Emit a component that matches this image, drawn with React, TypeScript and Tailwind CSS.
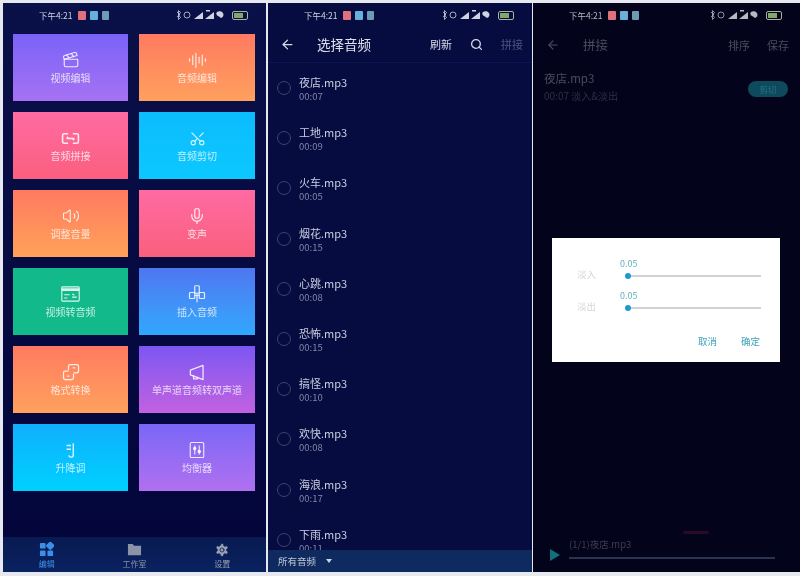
import { ArrowLeft, AudioLines, Clapperboard, Mic, Scissors, Search, Settings, Volume2 } from "lucide-react"
import type { ReactNode } from "react"

const cjk = "font-['Noto_Sans_CJK_SC','Liberation_Sans',sans-serif]"

function CardIcon() {
  return (
    <svg viewBox="0 0 24 20" className="h-[16px] w-[19px]" fill="none" stroke="currentColor" strokeWidth="1.4">
      <rect x="1" y="1" width="22" height="18" rx="1" />
      <path d="M1 4.500h22" strokeWidth="3.500" />
      <path d="M4 11h7M4 15h4M14 14h6M14 10l3 1.500" />
    </svg>
  )
}

function InsertIcon() {
  return (
    <svg viewBox="0 0 24 24" className="h-[18px] w-[18px]" fill="none" stroke="currentColor" strokeWidth="1.6">
      <rect x="9" y="1" width="6" height="10" rx="1" />
      <rect x="2" y="10" width="7" height="8" rx="1" />
      <rect x="15" y="10" width="7" height="8" rx="1" />
      <path d="M9 14h6M12 11v12" />
    </svg>
  )
}

function ChainIcon() {
  return (
    <svg viewBox="0 0 24 16" className="h-[13px] w-[19px]" fill="none" stroke="currentColor" strokeWidth="2">
      <path d="M9 2H4a2 2 0 0 0-2 2v8a2 2 0 0 0 2 2h5M15 2h5a2 2 0 0 1 2 2v8a2 2 0 0 1-2 2h-5" />
      <path d="M7 8h10M7 8l2-2M17 8l-2 2" />
    </svg>
  )
}

function FormatIcon() {
  return (
    <svg viewBox="0 0 24 24" className="h-[20px] w-[20px]" fill="none" stroke="currentColor" strokeWidth="1.500" strokeLinejoin="round">
      <path d="M9 10V5a2 2 0 0 1 2-2h8a2 2 0 0 1 2 2v6a2 2 0 0 1-2 2h-4" />
      <path d="M15 14v5a2 2 0 0 1-2 2H5a2 2 0 0 1-2-2v-6a2 2 0 0 1 2-2h4" />
      <path d="M14 7h3M7 17h3" />
    </svg>
  )
}

function HornIcon() {
  return (
    <svg viewBox="0 0 24 24" className="h-[19px] w-[19px]" fill="none" stroke="currentColor" strokeWidth="1.6" strokeLinejoin="round">
      <path d="M3 9l16-6v18L3 15z" />
      <path d="M7 15.500V20h5v-2.600" />
    </svg>
  )
}

function PitchIcon() {
  return (
    <svg viewBox="0 0 24 24" className="h-[18px] w-[18px]" fill="none" stroke="currentColor" strokeWidth="1.8">
      <path d="M15 3v15a3 3 0 0 1-6 1M6 6h6M6 11h6" />
    </svg>
  )
}

function EqualizerIcon() {
  return (
    <svg viewBox="0 0 24 24" className="h-[18px] w-[18px]" fill="none" stroke="currentColor" strokeWidth="1.500">
      <rect x="3" y="2" width="18" height="20" rx="1.500" />
      <path d="M9 6v12M15 6v12" />
      <circle cx="9" cy="10" r="1.600" fill="currentColor" />
      <circle cx="15" cy="14" r="1.600" fill="currentColor" />
    </svg>
  )
}

const tiles: { label: string; icon: ReactNode; bg: string }[] = [
  { label: "视频编辑", icon: <Clapperboard size={18} strokeWidth={1.5} />, bg: "bg-gradient-to-b from-[#7a62f8] to-[#a672f2]" },
  { label: "音频编辑", icon: <AudioLines size={19} strokeWidth={1.4} />, bg: "bg-gradient-to-b from-[#ff7a60] to-[#ffa05e]" },
  { label: "音频拼接", icon: <ChainIcon />, bg: "bg-gradient-to-b from-[#ff6ba2] to-[#fb5f7e]" },
  { label: "音频剪切", icon: <Scissors size={17} strokeWidth={1.5} className="-rotate-90" />, bg: "bg-gradient-to-b from-[#0cbcfe] to-[#0cc8ff]" },
  { label: "调整音量", icon: <Volume2 size={18} strokeWidth={1.5} />, bg: "bg-gradient-to-b from-[#ff7a60] to-[#ffa158]" },
  { label: "变声", icon: <Mic size={18} strokeWidth={1.6} />, bg: "bg-gradient-to-b from-[#ff6ba2] to-[#f95f7c]" },
  { label: "视频转音频", icon: <CardIcon />, bg: "bg-[#12b98b]" },
  { label: "插入音频", icon: <InsertIcon />, bg: "bg-gradient-to-b from-[#4d76f0] to-[#2ea8fd]" },
  { label: "格式转换", icon: <FormatIcon />, bg: "bg-gradient-to-b from-[#ff7a60] to-[#ffa15c]" },
  { label: "单声道音频转双声道", icon: <HornIcon />, bg: "bg-gradient-to-b from-[#7c56f2] to-[#c260e0]" },
  { label: "升降调", icon: <PitchIcon />, bg: "bg-gradient-to-b from-[#10b0fc] to-[#00d0ff]" },
  { label: "均衡器", icon: <EqualizerIcon />, bg: "bg-gradient-to-b from-[#7a66f6] to-[#b070f0]" },
]

const songs = [
  ["夜店.mp3", "00:07"],
  ["工地.mp3", "00:09"],
  ["火车.mp3", "00:05"],
  ["烟花.mp3", "00:15"],
  ["心跳.mp3", "00:08"],
  ["恐怖.mp3", "00:15"],
  ["搞怪.mp3", "00:10"],
  ["欢快.mp3", "00:08"],
  ["海浪.mp3", "00:17"],
  ["下雨.mp3", "00:11"],
]

function StatusBar({ dim }: { dim?: boolean }) {
  return (
    <div className={`flex h-[24px] shrink-0 items-center justify-between pl-[36px] pr-[18px] text-[8.500px] ${dim ? "text-[#b8b8c0]" : "text-[#cfd3e0]"}`}>
      <div className="flex items-center gap-[4px]">
        <span className="mr-[1px]">下午4:21</span>
        <span className="h-[9px] w-[8px] rounded-[1px] bg-[#e0707c]" />
        <span className="h-[9px] w-[8px] rounded-[1px] bg-[#68b0d8]" />
        <span className="h-[9px] w-[7px] rounded-[1px] bg-[#6a9cb4]" />
      </div>
      <div className="flex items-center gap-[4px]">
        <svg viewBox="0 0 52 10" className="h-[10px] w-[52px]" fill="currentColor">
          <path d="M1 2l3 2.500L1 7M2.500 0.500v9l2-2-2-2.500 2-2.500z" fill="none" stroke="currentColor" strokeWidth="0.8" />
          <circle cx="11" cy="5" r="3" fill="none" stroke="currentColor" strokeWidth="0.8" />
          <path d="M18 9l9-7v7zM29 9l9-7v7zM30 0h4v1.500h-4z" />
          <path d="M41 2a4 3.500 0 1 1 4 6l-2-1.500a4 3 0 0 1-2-4.500z" />
        </svg>
        <span className="flex h-[9px] w-[16px] items-center rounded-[2px] border border-[#a8b4a0] p-[1px]">
          <span className="h-full w-[9px] bg-[#80a868]" />
        </span>
      </div>
    </div>
  )
}

function HomePanel() {
  return (
    <div className="flex w-[263px] shrink-0 flex-col bg-gradient-to-b from-[#0a1048] to-[#03053a]">
      <StatusBar />
      <div className="grid grid-cols-[115px_116px] gap-x-[11px] gap-y-[11px] pl-[10px] pt-[7px]">
        {tiles.map((t) => (
          <div key={t.label} className={`flex h-[67px] flex-col items-center justify-center gap-[1px] text-white/85 ${t.bg}`}>
            <span className="flex h-[20px] items-center">{t.icon}</span>
            <span className="text-[10px] leading-[14px] text-white/75">{t.label}</span>
          </div>
        ))}
      </div>
      <div className="mt-auto grid h-[35px] grid-cols-3 bg-gradient-to-b from-[#081a52] to-[#0a2260] text-[8px]">
        <div className="flex flex-col items-center pt-[5px] text-[#3c8ee8]">
          <svg viewBox="0 0 16 16" className="h-[15px] w-[15px]" fill="currentColor">
            <rect x="1" y="1" width="6" height="6" rx="1" />
            <rect x="8.500" y="0.500" width="7" height="7" rx="1" transform="rotate(45 12 4)" />
            <rect x="1" y="9" width="6" height="6" rx="1" />
            <rect x="9" y="9" width="6" height="6" rx="1" />
          </svg>
          <span className="leading-[13px]">编辑</span>
        </div>
        <div className="flex flex-col items-center pt-[5px] text-[#8a93a8]">
          <svg viewBox="0 0 16 16" className="h-[15px] w-[15px]" fill="currentColor">
            <path d="M1 2h5l1.500 2H15v10H1z" />
          </svg>
          <span className="leading-[13px]">工作室</span>
        </div>
        <div className="flex flex-col items-center pt-[5px] text-[#98a0b2]">
          <Settings size={16} fill="currentColor" stroke="#0a1d58" strokeWidth={1.2} className="-my-[0.5px]" />
          <span className="leading-[13px]">设置</span>
        </div>
      </div>
    </div>
  )
}

function SelectPanel() {
  return (
    <div className="relative ml-[2px] w-[264px] shrink-0 overflow-hidden bg-[#070c40]">
      <StatusBar />
      <div className="flex h-[36px] items-center border-b border-[#0d1550] pl-[12px] pr-[9px] text-[#d8dbe8]">
        <ArrowLeft size={15} />
        <span className="ml-[22px] text-[13.500px] text-[#dfe2ee]">选择音频</span>
        <span className="ml-auto text-[11px]">刷新</span>
        <Search size={13} strokeWidth={2.4} className="ml-[18px]" />
        <span className="ml-[18px] text-[11px] text-[#4b5680]">拼接</span>
      </div>
      <div className="pl-[9px]">
        {songs.map(([name, time]) => (
          <div key={name} className="flex h-[50.200px] items-center">
            <span className="h-[14px] w-[14px] rounded-full border border-[#3b4570]" />
            <div className="ml-[8px] mt-[2px]">
              <div className="text-[11px] leading-[14px] text-[#c8cde0]">{name}</div>
              <div className="text-[9.500px] leading-[14px] text-[#7f88a8]">{time}</div>
            </div>
          </div>
        ))}
      </div>
      <div className="absolute inset-x-0 bottom-0 flex h-[22px] items-center bg-[#0e2a5e] pl-[10px] text-[9.500px] text-[#c0c6d8]">
        所有音频
        <span className="ml-[10px] h-0 w-0 border-x-[3.500px] border-t-[4px] border-x-transparent border-t-[#d0d4e0]" />
      </div>
    </div>
  )
}

function DialogSlider({ label }: { label: string }) {
  return (
    <div className="flex h-[32px] items-end">
      <span className="mb-[-2px] w-[48px] text-[9.500px] text-[#d4d6da]">{label}</span>
      <div className="flex-1">
        <div className="-ml-[5px] leading-[13px] text-[#5fb0c0]">0.05</div>
        <div className="mt-[3px] flex items-center">
          <span className="h-[6px] w-[6px] rounded-full bg-[#1e9ac8]" />
          <span className="h-[1.500px] flex-1 bg-[#d2d2d2]" />
        </div>
      </div>
    </div>
  )
}

function JoinPanel() {
  return (
    <div className="relative ml-[1px] flex-1 overflow-hidden bg-[#04031c]">
      <StatusBar dim />
      <div className="flex h-[36px] items-center pl-[13px] pr-[11px] text-[#4a4c5e]">
        <ArrowLeft size={14} />
        <span className="ml-[23px] text-[12.500px]">拼接</span>
        <span className="ml-auto text-[11px]">排序</span>
        <span className="ml-[17px] text-[11px]">保存</span>
      </div>
      <div className="flex items-start justify-between pl-[11px] pr-[12px] pt-[7px]">
        <div>
          <div className="text-[11.500px] leading-[16px] text-[#4a4c5e]">夜店.mp3</div>
          <div className="mt-[3px] text-[10px] leading-[13px] text-[#2e3044]">00:07 淡入&amp;淡出</div>
        </div>
        <span className="mt-[11px] flex h-[16px] w-[40px] items-center justify-center rounded-full bg-[#0e4a5c] text-[8.500px] text-[#1f7486]">剪切</span>
      </div>

      <div className="absolute left-[19px] top-[235px] h-[124px] w-[228px] bg-white pl-[25px] pr-[19px] pt-[9px] text-[9px]">
        <DialogSlider label="淡入" />
        <DialogSlider label="淡出" />
        <div className="mt-[23px] flex justify-end gap-[24px] pr-[1px] text-[9.500px] text-[#3fa4b8]">
          <span>取消</span>
          <span>确定</span>
        </div>
      </div>

      <span className="absolute left-[150px] top-[528px] h-[3px] w-[26px] rounded-full bg-[#2a0a28]" />
      <div className="absolute bottom-[13px] left-[17px] right-[25px] flex items-end">
        <span className="mb-[-2px] h-0 w-0 border-y-[6px] border-l-[10px] border-y-transparent border-l-[#10707c]" />
        <div className="ml-[9px] flex-1">
          <div className="text-[9.500px] leading-[14px] text-[#3c3e54]">(1/1)夜店.mp3</div>
          <div className="mt-[6px] h-[2px] bg-[#2a3450]" />
        </div>
      </div>
    </div>
  )
}

export default function App() {
  return (
    <div className={`flex h-[576px] w-[800px] overflow-hidden bg-[#e6eaf0] pb-[4px] pl-[3px] pt-[3px] blur-[0.5px] ${cjk}`}>
      <HomePanel />
      <SelectPanel />
      <JoinPanel />
    </div>
  )
}
